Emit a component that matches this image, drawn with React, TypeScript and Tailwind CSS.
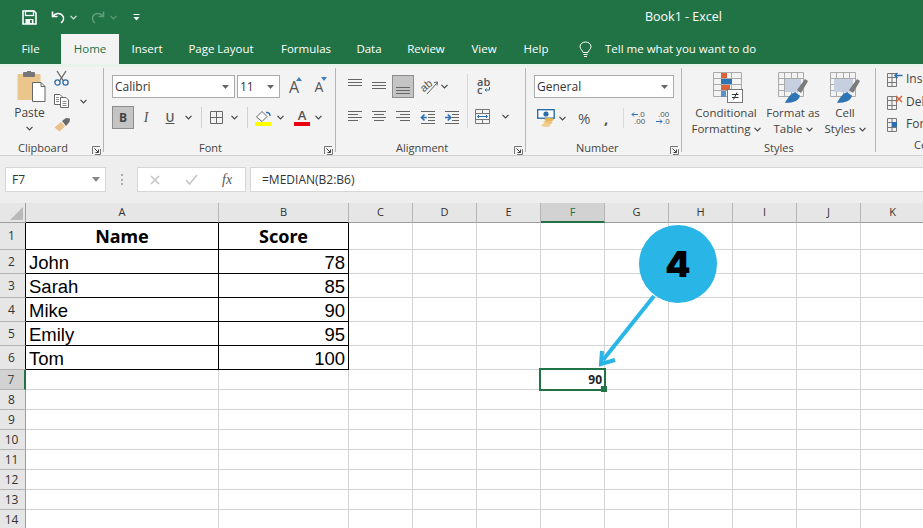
import React from "react";

const UI = "font-['Open_Sans','Noto_Sans',sans-serif]";

function Chev({ className = "", color = "#444" }: { className?: string; color?: string }) {
  return (
    <svg width="7" height="5" viewBox="0 0 7 5" className={`shrink-0 ${className}`}>
      <path d="M0.5 0.8 3.5 3.8 6.5 0.8" fill="none" stroke={color} strokeWidth="1.2" />
    </svg>
  );
}

function Launcher() {
  return (
    <svg width="9" height="9" viewBox="0 0 9 9" className="shrink-0 block">
      <path d="M0.5 8V0.5H8M8.5 3V8.5H3" fill="none" stroke="#777" />
      <path d="M2.5 2.5 6.5 6.5M3.5 6.5H6.5V3.5" fill="none" stroke="#444" />
    </svg>
  );
}

function Caret() {
  return (
    <svg width="7" height="4" viewBox="0 0 7 4" className="shrink-0"><path d="M0 0H7L3.5 4Z" fill="#666" /></svg>
  );
}

function Lines({ kind, className = "" }: { kind: "l" | "c" | "r" | "t" | "m" | "b"; className?: string }) {
  const ys = kind === "t" ? [1, 4, 7] : kind === "m" ? [4, 7, 10] : kind === "b" ? [7, 10, 13] : [1, 4, 7, 10];
  const seg = (i: number) => {
    if (kind === "l") return i % 2 ? "M0 Y H10" : "M0 Y H14";
    if (kind === "r") return i % 2 ? "M4 Y H14" : "M0 Y H14";
    if (kind === "c") return i % 2 ? "M2 Y H12" : "M0 Y H14";
    return "M0 Y H14";
  };
  return (
    <svg width="14" height="14" viewBox="0 0 14 14" className={`shrink-0 ${className}`}>
      {ys.map((y, i) => (
        <path key={y} d={seg(i).replace("Y", y + 0.5 + "")} stroke="#666" />
      ))}
    </svg>
  );
}

function Indent({ flip, className = "" }: { flip?: boolean; className?: string }) {
  return (
    <svg width="16" height="13" viewBox="0 0 16 13" className={`shrink-0 ${className}`}>
      <path d="M1 .5H15M8 3.5H15M8 6.5H15M8 9.5H15M1 12.5H15" stroke="#666" />
      <path d={flip ? "M1 6.5H6M3.8 3.5 6.8 6.5 3.8 9.5" : "M6.8 6.5H2M4.5 3.5 1.5 6.5 4.5 9.5"} fill="none" stroke="#2b6fb3" strokeWidth="1.6" />
    </svg>
  );
}

function PasteIcon() {
  return (
    <svg width="29" height="32" viewBox="0 0 29 32" className="shrink-0 block">
      <rect x="0.5" y="3" width="23" height="26" rx="1" fill="#eac68c" />
      <rect x="6" y="1" width="12" height="5" rx="1" fill="#777" />
      <rect x="10" y="0" width="4" height="2" fill="#777" />
      <path d="M15.5 11.5H24L28 15.5V30.5H15.5Z" fill="#fff" stroke="#666" />
      <path d="M24 11.5V15.5H28" fill="none" stroke="#666" />
    </svg>
  );
}

function Scissors() {
  return (
    <svg width="15" height="16" viewBox="0 0 15 16" className="shrink-0 block">
      <path d="M3 1 9.5 11M12 1 5.5 11" fill="none" stroke="#666" strokeWidth="1.3" />
      <circle cx="3.5" cy="12.5" r="2.6" fill="none" stroke="#2d6ea8" strokeWidth="1.3" />
      <circle cx="11.5" cy="12.5" r="2.6" fill="none" stroke="#2d6ea8" strokeWidth="1.3" />
    </svg>
  );
}

function CopyIcon() {
  return (
    <svg width="15" height="14" viewBox="0 0 15 14" className="shrink-0 block">
      <path d="M.5.5H6L8 2.5V10.5H.5Z" fill="#fff" stroke="#666" />
      <path d="M6.5 3.5H12L14.5 6V13.5H6.5Z" fill="#fff" stroke="#666" />
      <path d="M2 3.5H5M2 5.5H5M2 7.5H5M8.5 7.5H12.5M8.5 9.5H12.5M8.5 11.5H12.5" stroke="#888" />
    </svg>
  );
}

function Painter() {
  return (
    <svg width="17" height="15" viewBox="0 0 17 15" className="shrink-0 block">
      <path d="M0.5 10.5 7 5 11 9.5 5.5 14.5Z" fill="#eac08c" />
      <path d="M8 4 12 1 16 1.5 15.5 5 12 9Z" fill="#6a6a6a" />
    </svg>
  );
}

function BigA({ up }: { up?: boolean }) {
  return (
    <div className="relative w-[12px] h-[16px] shrink-0">
      <span className={`block text-center leading-[16px] text-[#555] ${up ? "text-[16px]" : "text-[14px] mt-[1px]"}`}>A</span>
      <svg width="6" height="4" viewBox="0 0 6 4" className="absolute -right-[2px] -top-[2px]">
        <path d={up ? "M0 4 3 0 6 4Z" : "M0 0 6 0 3 4Z"} fill="#3f7fbf" />
      </svg>
    </div>
  );
}

function BorderIcon({ className = "" }: { className?: string }) {
  return (
    <svg width="13" height="13" viewBox="0 0 13 13" className={`shrink-0 ${className}`}>
      <path d="M.5.5H12.5V12.5H.5ZM6.5.5V12.5M.5 6.5H12.5" fill="none" stroke="#666" />
    </svg>
  );
}

function FillIcon({ className = "" }: { className?: string }) {
  return (
    <svg width="17" height="16" viewBox="0 0 17 16" className={`shrink-0 ${className}`}>
      <path d="M1.5 7 7 1.5 12 6.5 7 11.5Z" fill="#fff" stroke="#666" />
      <path d="M11 2.5C14 2 15 4 15 6" fill="none" stroke="#2f75b5" strokeWidth="1.5" />
      <rect x="0" y="12" width="16" height="4" fill="#ffff00" />
    </svg>
  );
}

function ColorA({ className = "" }: { className?: string }) {
  return (
    <div className={`w-[16px] shrink-0 flex flex-col items-center ${className}`}>
      <span className="block text-[13px] leading-[12px] font-semibold text-[#555]">A</span>
      <span className="block w-[16px] h-[4px] mt-[1px] bg-[#e8000f]" />
    </div>
  );
}

function Orient({ className = "" }: { className?: string }) {
  return (
    <svg width="18" height="16" viewBox="0 0 18 16" className={`shrink-0 ${className}`}>
      <text x="0" y="10" fontSize="11" fontFamily="Liberation Sans" fill="#555" transform="rotate(-40 6 8)">ab</text>
      <path d="M6 15 16 4M13 3.5 16.5 3 16 6.5" fill="none" stroke="#666" />
    </svg>
  );
}

function MergeIcon({ className = "" }: { className?: string }) {
  return (
    <svg width="15" height="15" viewBox="0 0 15 15" className={`shrink-0 ${className}`}>
      <path d="M.5.5H14.5V14.5H.5ZM.5 4.5H14.5M.5 10.5H14.5M7.5.5V4.5M7.5 10.5V14.5" fill="none" stroke="#777" />
      <path d="M2.5 7.5H12.5M4 6 2.5 7.5 4 9M11 6 12.5 7.5 11 9" fill="none" stroke="#2b6fb3" />
    </svg>
  );
}

function MoneyIcon({ className = "" }: { className?: string }) {
  return (
    <svg width="18" height="18" viewBox="0 0 18 18" className={`shrink-0 ${className}`}>
      <rect x="0.7" y="0.7" width="16.5" height="8.5" fill="#fff" stroke="#2d6ea8" strokeWidth="1.4" />
      <circle cx="9" cy="5" r="2.6" fill="#2d6ea8" />
      <ellipse cx="12" cy="10.5" rx="4.5" ry="1.7" fill="#e9b44c" />
      <ellipse cx="11" cy="13.5" rx="4.5" ry="1.7" fill="#eec478" />
      <ellipse cx="9" cy="16.2" rx="4.5" ry="1.7" fill="#f0cf90" />
    </svg>
  );
}

function CondIcon() {
  return (
    <svg width="30" height="31" viewBox="0 0 30 31" className="shrink-0 block">
      <path d="M.5.5H28.5V24.5H.5ZM.5 6.5H28.5M.5 12.5H28.5M.5 18.5H28.5M8.5.5V24.5M18.5.5V24.5" fill="none" stroke="#aaa" />
      <rect x="8" y="1" width="6" height="5" fill="#d9643a" />
      <rect x="8" y="7" width="11" height="5" fill="#2f75b5" />
      <rect x="8" y="13" width="9" height="5" fill="#d9643a" />
      <rect x="8" y="19" width="5" height="6" fill="#5b93c9" />
      <rect x="14.5" y="17.5" width="15" height="13" fill="#fff" stroke="#777" />
      <path d="M19 22.5H25.5M19 25.5H25.5M24 20.5 20.5 27.5" fill="none" stroke="#333" />
    </svg>
  );
}

function TableIcon({ tone = "#c5cfdf", full }: { tone?: string; full?: boolean }) {
  return (
    <svg width="30" height="31" viewBox="0 0 30 31" className="shrink-0 block">
      <path d="M.5.5H25.5V24.5H.5ZM.5 6.5H25.5M.5 12.5H25.5M.5 18.5H25.5M6.5.5V24.5M13.5.5V24.5M19.5.5V24.5" fill="none" stroke="#aaa" />
      <rect x={full ? 4 : 7} y="7" width={full ? 19 : 16} height="13" fill={tone} />
      <path d="M19 18 27 7 30 9 23 21Z" fill="#7b7b7b" />
      <path d="M7 31C10 25 13 21 18 20L22 23C22 28 16 31 7 31Z" fill="#2f75b5" />
      <path d="M18 20 22 23" stroke="#e8eef5" strokeWidth="1.5" />
    </svg>
  );
}

function CellRowIcon({ kind }: { kind: "i" | "d" | "f" }) {
  return (
    <svg width="16" height="16" viewBox="0 0 16 16" className="shrink-0">
      <path d="M.5 2.5H9.5V15.5H.5ZM.5 6.5H9.5M.5 11.5H9.5M5 2.5V15.5" fill="none" stroke="#777" />
      {kind === "i" && <path d="M15.5 4.5H8M10.5 2 8 4.5 10.5 7" fill="none" stroke="#2b6fb3" strokeWidth="1.5" />}
      {kind === "d" && <path d="M9 2 15 8M15 2 9 8" stroke="#d9643a" strokeWidth="1.5" />}
      {kind === "f" && <rect x="5" y="6" width="5" height="5" fill="#2b6fb3" />}
    </svg>
  );
}

function Group({ width, label, center, launcher, children }: { width: string; label: string; center: string; launcher?: string; children: React.ReactNode }) {
  return (
    <div className={`${width} shrink-0 h-[84px] mt-[1px] border-r border-[#b5b5b5] flex flex-col`}>
      <div className="h-[73px]">{children}</div>
      <div className="relative h-[11px] text-[11px] leading-[14px] text-[#444]">
        <span className={`block ${center}`}>{label}</span>
        {launcher && <span className={`absolute top-[5px] ${launcher}`}><Launcher /></span>}
      </div>
    </div>
  );
}

const tabs = [
  ["File", "w-[61px]"],
  ["Home", "w-[58px]"],
  ["Insert", "w-[56px]"],
  ["Page Layout", "w-[92px]"],
  ["Formulas", "w-[78px]"],
  ["Data", "w-[48px]"],
  ["Review", "w-[66px]"],
  ["View", "w-[50px]"],
  ["Help", "w-[54px]"],
];

const cols = ["A", "B", "C", "D", "E", "F", "G", "H", "I", "J", "K"];
const table: Record<number, [string, string]> = {
  1: ["Name", "Score"],
  2: ["John", "78"],
  3: ["Sarah", "85"],
  4: ["Mike", "90"],
  5: ["Emily", "95"],
  6: ["Tom", "100"],
};
const rows = [1, 2, 3, 4, 5, 6, 7, 8, 9, 10, 11, 12, 13, 14];

export default function App() {
  return (
    <div className={`relative w-[923px] h-[528px] overflow-hidden bg-white ${UI}`}>
      {/* Title bar */}
      <div className="h-[34px] bg-[#217346] flex items-center text-white">
        <svg width="15" height="15" viewBox="0 0 15 15" className="ml-[22px] shrink-0">
          <path d="M1 1H12L14 3V14H1Z" fill="none" stroke="#fff" strokeWidth="1.6" />
          <rect x="3.5" y="1" width="8" height="4.5" fill="none" stroke="#fff" strokeWidth="1.3" />
          <rect x="3.5" y="9" width="8" height="5" fill="#fff" />
          <rect x="8" y="10" width="1.8" height="3" fill="#217346" />
        </svg>
        <svg width="15" height="14" viewBox="0 0 15 14" className="ml-[14px] shrink-0">
          <path d="M1.5 1.5V6.5H6.5" fill="none" stroke="#fff" strokeWidth="1.6" />
          <path d="M2 6.5C4 3 9 2.5 11.5 5.5 13.5 8 12.5 11 10 13" fill="none" stroke="#fff" strokeWidth="1.6" />
        </svg>
        <Chev color="#d8e8df" className="ml-[4px]" />
        <svg width="15" height="14" viewBox="0 0 15 14" className="ml-[13px] shrink-0">
          <path d="M13.5 1.5V6.5H8.5" fill="none" stroke="#5f9c7b" strokeWidth="1.6" />
          <path d="M13 6.5C11 3 6 2.5 3.5 5.5 1.5 8 2.5 11 5 13" fill="none" stroke="#5f9c7b" strokeWidth="1.6" />
        </svg>
        <Chev color="#5f9c7b" className="ml-[5px]" />
        <svg width="7" height="8" viewBox="0 0 7 8" className="ml-[16px] shrink-0">
          <path d="M.5 1.5H6.5" stroke="#fff" />
          <path d="M.5 4 3.5 7.5 6.5 4Z" fill="#fff" />
        </svg>
        <span className="ml-[505px] text-[12.5px]">Book1 - Excel</span>
      </div>

      {/* Tabs */}
      <div className="h-[30px] bg-[#217346] flex text-[11.5px] text-white">
        {tabs.map(([t, w]) => (
          <div
            key={t}
            className={`${w} shrink-0 text-center leading-[30px] ${t === "Home" ? "bg-[#f3f3f3] text-[#217346]" : ""}`}
          >
            {t}
          </div>
        ))}
        <div className="flex items-center ml-[16px]">
          <svg width="13" height="17" viewBox="0 0 13 17" className="shrink-0">
            <path d="M4 11.5C4 9.5 1 8.5 1 5.5 1 3 3.5 1 6.5 1S12 3 12 5.5C12 8.5 9 9.5 9 11.5Z" fill="none" stroke="#fff" />
            <path d="M4.5 13.5H8.5M5 15.5H8" stroke="#fff" />
          </svg>
          <span className="ml-[13px]">Tell me what you want to do</span>
        </div>
      </div>

      {/* Ribbon */}
      <div className="h-[92px] bg-[#f3f3f3] border-t-[3px] border-b border-t-[#e8f3ec] border-b-[#d2d2d2] flex text-[#444] overflow-hidden">
        <Group width="w-[104px]" label="Clipboard" center="ml-[18px]" launcher="left-[92px]">
          <div className="flex">
            <div className="w-[54px] flex flex-col items-center pl-[5px]">
              <div className="mt-[3px] h-[34px] ml-[3px]"><PasteIcon /></div>
              <span className="text-[12px] leading-[16px]">Paste</span>
              <Chev className="mt-[5px]" />
            </div>
            <div className="flex flex-col mt-[2px]">
              <Scissors />
              <div className="flex items-center mt-[8px] h-[14px]">
                <CopyIcon />
                <Chev className="ml-[11px]" />
              </div>
              <div className="mt-[9px]"><Painter /></div>
            </div>
          </div>
        </Group>

        <Group width="w-[232px]" label="Font" center="ml-[95px]" launcher="left-[220px]">
          <div className="flex items-center h-[23px] mt-[7px] ml-[8px]">
            <div className="w-[123px] h-[23px] bg-white border border-[#ababab] flex items-center justify-between pl-[2px] pr-[5px] text-[12px] text-[#333]">
              Calibri
              <Caret />
            </div>
            <div className="w-[43px] h-[23px] ml-[2px] bg-white border border-[#ababab] flex items-center justify-between pl-[2px] pr-[5px] text-[12px] text-[#333]">
              11
              <Caret />
            </div>
            <div className="ml-[8px]"><BigA up /></div>
            <div className="ml-[13px]"><BigA /></div>
          </div>
          <div className="flex items-center h-[23px] mt-[8px] ml-[8px]">
            <div className="w-[22px] h-[23px] bg-[#c4c4c4] border border-[#8d8d8d] flex items-center justify-center text-[12px] font-bold text-[#444]">B</div>
            <span className="w-[12px] ml-[6px] text-center text-[14px] italic font-['Liberation_Serif',serif] text-[#555]">I</span>
            <span className="w-[12px] ml-[12px] text-center text-[12px] font-semibold underline text-[#555]">U</span>
            <Chev className="ml-[9px]" />
            <span className="w-px h-[21px] ml-[9px] bg-[#d0d0d0]" />
            <BorderIcon className="ml-[8px]" />
            <Chev className="ml-[8px]" />
            <span className="w-px h-[21px] ml-[9px] bg-[#d0d0d0]" />
            <FillIcon className="ml-[7px]" />
            <Chev className="ml-[5px]" />
            <ColorA className="ml-[10px]" />
            <Chev className="ml-[5px]" />
          </div>
        </Group>

        <Group width="w-[190px]" label="Alignment" center="ml-[60px]" launcher="left-[178px]">
          <div className="flex">
            <div className="w-[131px] shrink-0">
              <div className="flex items-center h-[23px] mt-[7px]">
                <Lines kind="t" className="ml-[12px] -mt-[3px]" />
                <Lines kind="m" className="ml-[10px] -mt-[3px]" />
                <div className="w-[22px] h-[23px] ml-[6px] bg-[#c4c4c4] border border-[#8d8d8d] flex items-center justify-center"><Lines kind="b" /></div>
                <Orient className="ml-[7px]" />
                <Chev className="ml-[2px]" />
              </div>
              <div className="flex items-center h-[16px] mt-[11px]">
                <Lines kind="l" className="ml-[12px]" />
                <Lines kind="c" className="ml-[10px]" />
                <Lines kind="r" className="ml-[10px]" />
                <Indent className="ml-[10px]" />
                <Indent flip className="ml-[8px]" />
              </div>
            </div>
            <span className="w-px h-[54px] mt-[6px] shrink-0 bg-[#d8d8d8]" />
            <div className="flex flex-col">
              <div className="h-[15px] mt-[10px] ml-[9px] relative w-[14px] text-[11px] leading-[8px] text-[#555] font-semibold">
                ab<br />c
                <svg width="6" height="5" viewBox="0 0 6 5" className="absolute left-[7px] top-[9px]"><path d="M5.5 0V3H1M2.5 1.5 1 3 2.5 4.5" fill="none" stroke="#2b6fb3" /></svg>
              </div>
              <div className="flex items-center mt-[16px] ml-[7px] h-[15px]">
                <MergeIcon />
                <Chev className="ml-[12px]" />
              </div>
            </div>
          </div>
        </Group>

        <Group width="w-[156px]" label="Number" center="ml-[50px]" launcher="left-[144px]">
          <div className="w-[140px] h-[23px] mt-[7px] ml-[8px] bg-white border border-[#ababab] flex items-center justify-between pl-[2px] pr-[5px] text-[12px] text-[#333]">
            General
            <Caret />
          </div>
          <div className="flex items-center h-[20px] mt-[10px]">
            <MoneyIcon className="ml-[11px]" />
            <Chev className="ml-[4px]" />
            <span className="ml-[12px] w-[14px] text-[15px] leading-[20px] text-[#555]">%</span>
            <span className="ml-[12px] w-[6px] text-[15px] font-bold leading-[14px] text-[#555]">,</span>
            <span className="w-px h-[20px] ml-[13px] bg-[#d8d8d8]" />
            <svg width="15" height="14" viewBox="0 0 15 14" className="ml-[7px] shrink-0">
              <path d="M7 3.5H1M3 1.5 1 3.5 3 5.5" fill="none" stroke="#2b6fb3" />
              <text x="7" y="6" fontSize="8" fill="#555" fontFamily="Liberation Sans">.0</text>
              <text x="3" y="13" fontSize="8" fill="#555" fontFamily="Liberation Sans">.00</text>
            </svg>
            <svg width="15" height="14" viewBox="0 0 15 14" className="ml-[9px] shrink-0">
              <text x="3" y="6" fontSize="8" fill="#555" fontFamily="Liberation Sans">.00</text>
              <path d="M7 10.5H1M5 8.5 7 10.5 5 12.5" fill="none" stroke="#2b6fb3" />
              <text x="8" y="13" fontSize="8" fill="#555" fontFamily="Liberation Sans">.0</text>
            </svg>
          </div>
        </Group>

        <Group width="w-[194px]" label="Styles" center="ml-[82px]">
          <div className="flex text-[11.5px] leading-[16px] text-center">
            <div className="w-[88px] flex flex-col items-center">
              <div className="mt-[4px] mb-[2px] ml-[3px]"><CondIcon /></div>
              <span>Conditional</span>
              <span className="flex items-center whitespace-nowrap">Formatting<Chev className="ml-[3px]" /></span>
            </div>
            <div className="w-[46px] flex flex-col items-center">
              <div className="mt-[4px] mb-[2px]"><TableIcon /></div>
              <span className="whitespace-nowrap">Format as</span>
              <span className="flex items-center whitespace-nowrap">Table<Chev className="ml-[3px]" /></span>
            </div>
            <div className="w-[58px] flex flex-col items-center">
              <div className="mt-[4px] mb-[2px]"><TableIcon full /></div>
              <span>Cell</span>
              <span className="flex items-center whitespace-nowrap">Styles<Chev className="ml-[3px]" /></span>
            </div>
          </div>
        </Group>

        <div className="w-[60px] shrink-0 h-[84px] mt-[1px] flex flex-col pl-[11px] text-[12px] leading-[16px]">
          <div className="h-[73px] flex flex-col gap-[6.5px] pt-[3px]">
            <div className="flex items-center gap-[3px]"><CellRowIcon kind="i" /><span>Insert</span></div>
            <div className="flex items-center gap-[3px]"><CellRowIcon kind="d" /><span>Delete</span></div>
            <div className="flex items-center gap-[3px]"><CellRowIcon kind="f" /><span>Format</span></div>
          </div>
          <span className="text-[11px] leading-[14px] ml-[27px]">Cells</span>
        </div>
      </div>

      {/* Formula bar */}
      <div className="h-[47px] bg-[#eeeeee] pt-[11px] flex items-start text-[12px] text-[#333]">
        <div className="w-[101px] h-[25px] ml-[5px] bg-white border border-[#d6d6d6] flex items-center justify-between pl-[6px] pr-[5px]">
          F7
          <svg width="8" height="5" viewBox="0 0 8 5"><path d="M0 0H8L4 5Z" fill="#888" /></svg>
        </div>
        <div className="w-[2px] h-[11px] ml-[15px] mt-[7px] border-l-2 border-dotted border-[#aaa]" />
        <div className="w-[109px] h-[25px] ml-[14px] bg-white border border-[#d6d6d6] flex items-center">
          <svg width="10" height="10" viewBox="0 0 10 10" className="ml-[12px] shrink-0"><path d="M1 1 9 9M9 1 1 9" stroke="#c6c6c6" strokeWidth="1.6" /></svg>
          <svg width="13" height="11" viewBox="0 0 13 11" className="ml-[25px] shrink-0"><path d="M1 6 4.5 10 12 1" fill="none" stroke="#c6c6c6" strokeWidth="1.6" /></svg>
          <span className="ml-[24px] text-[14px] leading-[14px] italic font-['Liberation_Serif',serif] text-[#555]">fx</span>
        </div>
        <div className="flex-1 h-[25px] ml-[4px] bg-white border-y border-l border-[#d6d6d6] flex items-center pl-[11px]">=MEDIAN(B2:B6)</div>
      </div>

      {/* Sheet */}
      <div className="grid grid-cols-[26px_193px_130px_64px_64px_64px_64px_64px_64px_64px_64px_64px] grid-rows-[20px_27px_24px_24px_24px_24px_24px_20px_20px_20px_20px_20px_20px_20px_20px]">
        <div className="bg-[#e6e6e6] border-r border-b border-[#9d9d9d] flex items-end justify-end">
          <svg width="13" height="13" viewBox="0 0 13 13" className="mr-[2px] mb-[2px]"><path d="M13 0V13H0Z" fill="#b9b9b9" /></svg>
        </div>
        {cols.map((c) => (
          <div
            key={c}
            className={`flex items-center justify-center text-[11px] border-r ${
              c === "F"
                ? "bg-[#d2d2d2] border-r-[#b5b5b5] border-b-2 border-b-[#217346] text-[#217346]"
                : c === "A" || c === "B"
                ? "bg-[#e6e6e6] border-r-[#b5b5b5] border-b border-b-black text-[#333]"
                : "bg-[#e6e6e6] border-r-[#b5b5b5] border-b border-b-[#9d9d9d] text-[#333]"
            }`}
          >
            {c}
          </div>
        ))}
        {rows.map((r) => (
          <React.Fragment key={r}>
            <div
              className={`flex items-center justify-center text-[12px] pr-[2px] border-b ${
                r === 7
                  ? "bg-[#d2d2d2] border-r-2 border-r-[#217346] border-b-[#b5b5b5] text-[#444]"
                  : r <= 6
                  ? "bg-[#e6e6e6] border-r border-r-black border-b-[#b5b5b5] text-[#333]"
                  : "bg-[#e6e6e6] border-r border-r-[#9d9d9d] border-b-[#b5b5b5] text-[#333]"
              }`}
            >
              {r}
            </div>
            {cols.map((c) => {
              const inTable = r <= 6 && (c === "A" || c === "B");
              if (inTable) {
                const v = table[r][c === "A" ? 0 : 1];
                return (
                  <div
                    key={c}
                    className={`flex items-center border-r border-b border-black text-black ${
                      r === 1
                        ? "justify-center text-[18px] font-bold font-['Noto_Sans',sans-serif]"
                        : c === "A"
                        ? "pl-[3px] pt-[2px] text-[18.5px] font-['Liberation_Sans',sans-serif]"
                        : "justify-end pr-[3px] pt-[2px] text-[18.5px] font-['Liberation_Sans',sans-serif]"
                    }`}
                  >
                    {v}
                  </div>
                );
              }
              if (c === "F" && r === 7) {
                return (
                  <div key={c} className="relative -ml-[2px] -mt-[2px] w-[67px] h-[23px] border-2 border-[#217346] flex items-center justify-end pr-[2px] text-[12px] font-bold text-[#222] z-10">
                    90
                    <span className="absolute -right-[3px] -bottom-[3px] w-[6px] h-[6px] bg-[#217346]" />
                  </div>
                );
              }
              return <div key={c} className="border-r border-b border-[#d4d4d4]" />;
            })}
          </React.Fragment>
        ))}
      </div>

      {/* Callout */}
      <div className="absolute left-[639px] top-[225px] w-[78px] h-[78px] rounded-full bg-[#29b5e6] z-20 flex items-center justify-center text-[36px] leading-none font-black text-black font-['Inter',sans-serif]">
        4
      </div>
      <svg width="70" height="90" viewBox="0 0 70 90" className="absolute left-[595px] top-[285px] z-20">
        <path d="M59 11 8 75" fill="none" stroke="#29b5e6" strokeWidth="4" />
        <path d="M7 66 6 79 20 75" fill="none" stroke="#29b5e6" strokeWidth="4" />
      </svg>
    </div>
  );
}
